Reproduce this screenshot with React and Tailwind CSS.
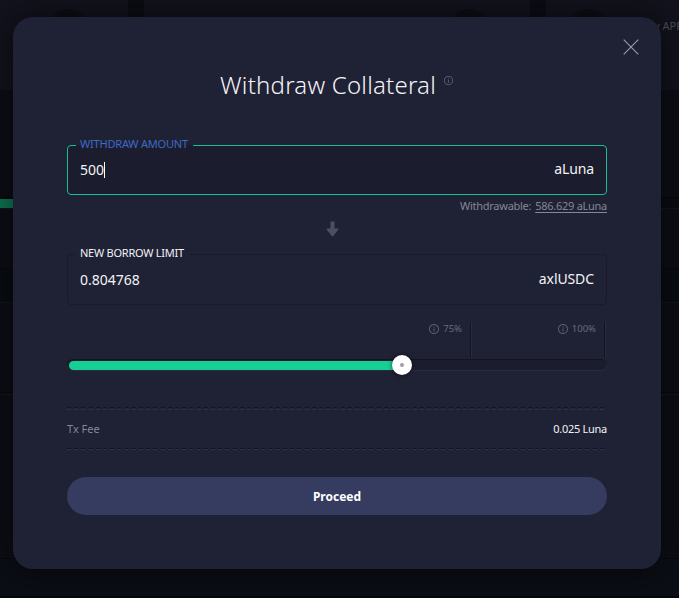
import React from 'react';

function InfoIcon({ size }) {
  return (
    <svg width={size} height={size} viewBox="0 0 24 24" fill="currentColor" className="shrink-0">
      <path d="M11 17h2v-6h-2v6zm1-15C6.48 2 2 6.48 2 12s4.48 10 10 10 10-4.48 10-10S17.52 2 12 2zm0 18.2c-4.52 0-8.2-3.68-8.2-8.2S7.48 3.8 12 3.8s8.2 3.68 8.2 8.2-3.68 8.2-8.2 8.2zM11 9h2V7h-2v2z" />
    </svg>
  );
}

function Backdrop() {
  return (
    <div className="flex h-[598px] w-[679px] flex-col bg-[#0b0d15]">
      <div className="flex h-[90px] gap-4">
        <div className="flex w-32 shrink-0 items-start justify-center bg-[#12131d] pt-[9px] pl-2">
          <div className="h-10 w-10 rounded-full bg-[#0d0e16]" />
        </div>
        <div className="flex w-[386px] shrink-0 items-start justify-end bg-[#12131d] pt-[9px] pr-[41px]">
          <div className="h-10 w-10 rounded-full bg-[#0d0e16]" />
        </div>
        <div className="flex w-[133px] shrink-0 items-start overflow-hidden bg-[#12131d] pt-[9px] pl-[22px]">
          <div className="h-10 w-10 shrink-0 rounded-full bg-[#0d0e16]" />
          <span className="ml-[46px] pt-[9px] text-[11px] leading-4 whitespace-nowrap text-[#50525b]">y APR</span>
        </div>
      </div>
      <div className="h-[108px] border-b border-[#06070c] bg-[#0d0e16]" />
      <div className="flex h-[11px] border-b border-[#15161f] bg-[#0a0c13]">
        <div className="mt-px h-[9px] w-[340px] bg-[#0f7754]" />
      </div>
      <div className="h-[59px] bg-[#0d0e16]" />
      <div className="h-[35px] border-t border-b border-t-[#07080d] border-b-[#15161f] bg-[#090c13]" />
      <div className="h-[89px] bg-[#0d0e16]" />
      <div className="h-[3px] border-t border-b border-t-[#07080d] border-b-[#15161f] bg-[#0d0e16]" />
      <div className="h-[164px] border-b border-[#07080d] bg-[#0d0e16]" />
      <div className="h-[37px] bg-[#0b0e15]" />
      <div className="h-[2px] bg-[#06070a]" />
    </div>
  );
}

function Dashes() {
  return (
    <div className="h-px bg-[repeating-linear-gradient(90deg,#121420_0px,#121420_4px,transparent_4px,transparent_7.2px)]" />
  );
}

function LightDashes() {
  return (
    <div className="h-px bg-[repeating-linear-gradient(90deg,#303249_0px,#303249_4px,transparent_4px,transparent_7.2px)]" />
  );
}

function Mark({ label }) {
  return (
    <div className="flex h-9 justify-end gap-[3px] border-r border-[#121420] pt-px pr-2 text-[#696b7b] shadow-[1px_0_0_#292b3f]">
      <span className="flex h-3 items-center text-[#5d5f70]">
        <InfoIcon size={12} />
      </span>
      <span className="text-[9.5px] leading-3">{label}</span>
    </div>
  );
}

export default function App() {
  return (
    <div className="relative h-[598px] w-[679px] overflow-hidden font-['Noto_Sans','Open_Sans',sans-serif]">
      <Backdrop />
      <div
        role="dialog"
        className="absolute top-[17px] left-[13px] flex h-[552px] w-[648px] flex-col rounded-[20px] bg-[#1f2135] px-[54px] shadow-[0_0_33px_8px_rgba(0,0,0,0.4)]"
      >
        <button className="mt-[22px] -mr-8 flex h-4 w-4 self-end" aria-label="Close">
          <svg width="16" height="16" viewBox="0 0 16 16" fill="none" stroke="#9b9ca6" strokeWidth="1.1">
            <path d="M.7.7l14.6 14.6M15.3.7L.7 15.3" />
          </svg>
        </button>

        <h1 className="mt-3 flex h-9 items-start justify-center gap-[7px] text-[24px] leading-9 font-light text-[#f3f3f5]">
          <span className="tracking-[0.22px] whitespace-nowrap">Withdraw Collateral</span>
          <span className="flex pt-2 text-[#5d5f70]">
            <InfoIcon size={11} />
          </span>
        </h1>

        <fieldset className="mt-[33px] h-[59px] rounded-[4px] border border-[#19bf90] bg-[#1b1d2e] px-2">
          <legend className="px-1 text-[11px] leading-[19px] tracking-[-0.2px] whitespace-nowrap text-[#3e69c4]">
            <span className="-mt-[2px] mb-[2px] block w-[109px]">WITHDRAW AMOUNT</span>
          </legend>
          <div className="flex items-start justify-between px-1 pt-[5px] text-[14px] leading-5 text-[#f3f3f5]">
            <span className="flex items-center">
              500
              <span className="h-4 w-px bg-white" />
            </span>
            <span className="-mt-px tracking-[-0.1px]">aLuna</span>
          </div>
        </fieldset>

        <div className="mt-[3px] flex h-4 justify-end gap-1 text-[11px] leading-4 tracking-[-0.27px] text-[#858794]">
          <span>Withdrawable:</span>
          <span className="underline underline-offset-2">586.629 aLuna</span>
        </div>

        <div className="mt-[7px] flex h-4 justify-center pr-[9px] text-[#4d4f61]">
          <svg width="14" height="16" viewBox="0 0 14 16" fill="currentColor">
            <path d="M4.5.5h4v7h3.4q1.2.2.3 1.2L7.2 15q-.7.8-1.4 0L.8 8.7Q-.1 7.7 1.1 7.5h3.4z" />
          </svg>
        </div>

        <fieldset className="mt-2 h-[60px] rounded-[4px] border border-[#191b2a] px-2">
          <legend className="px-1 text-[11px] leading-[19px] tracking-[-0.25px] whitespace-nowrap text-[#f3f3f5]">
            <span className="-mt-[2px] mb-[2px] block w-[106px]">NEW BORROW LIMIT</span>
          </legend>
          <div className="flex items-start justify-between px-1 pt-[6px] text-[14px] leading-5 text-[#f3f3f5]">
            <span>0.804768</span>
            <span className="-mt-px tracking-[-0.1px]">axlUSDC</span>
          </div>
        </fieldset>

        <div className="mt-[17px] grid grid-cols-[404px_134px] text-[#696b7b]">
          <Mark label="75%" />
          <Mark label="100%" />
        </div>

        <div className="mt-px flex h-3 items-center rounded-[6px] bg-[#1b1d2e] p-[2px] shadow-[inset_0_1px_0_#121420,inset_0_-1px_0_#292b3f,inset_-1px_0_0_#292b3f]">
          <div className="h-[9px] w-[332px] rounded-l-full bg-[#17ce94]" />
          <div className="-ml-[9px] flex h-5 w-5 items-center justify-center rounded-full bg-white shadow-[0_0_4px_rgba(0,0,0,0.6)]">
            <div className="h-1 w-1 rounded-full bg-[#a0a0a0]" />
          </div>
        </div>

        <div className="mt-9 flex flex-col gap-px">
          <Dashes />
          <LightDashes />
        </div>
        <div className="flex h-[38px] items-center justify-between text-[11px] leading-4">
          <span className="text-[#858794]">Tx Fee</span>
          <span className="tracking-[-0.28px] text-[#f3f3f5]">0.025 Luna</span>
        </div>
        <Dashes />
        <LightDashes />

        <button className="mt-[27px] h-[38px] rounded-full bg-[#363c5f] pt-[2px] text-[12px] leading-5 font-bold text-white">
          Proceed
        </button>
      </div>
    </div>
  );
}
